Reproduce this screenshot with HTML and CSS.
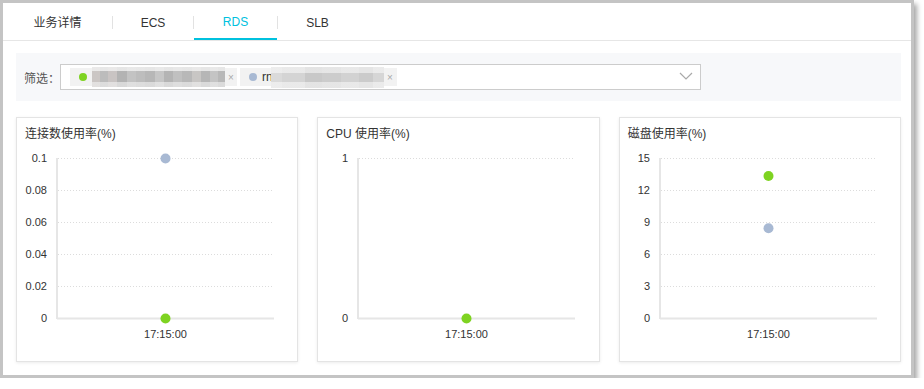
FILE: index.html
```html
<!DOCTYPE html>
<html lang="zh-CN">
<head>
  <meta charset="UTF-8" />
  <title>RDS 监控</title>
  <link rel="stylesheet" href="styles.css">
</head>
<body>
  <div class="window">
    <!-- Tabs -->
    <div class="tabs">
      <div class="tab tab-biz">业务详情</div>
      <span class="tab-sep"></span>
      <div class="tab tab-ecs">ECS</div>
      <span class="tab-sep"></span>
      <div class="tab tab-rds active">RDS</div>
      <span class="tab-sep"></span>
      <div class="tab tab-slb">SLB</div>
    </div>

    <div class="content">
      <!-- Filter -->
      <div class="filter">
        <span class="filter-label">筛选：</span>
        <div class="select">
          <div class="tag">
            <span class="dot green"></span>
            <span class="blur blur-a"></span>
            <span class="tag-close">×</span>
          </div>
          <div class="tag tag-b">
            <span class="dot blue"></span>
            <span class="tag-text">rn</span>
            <span class="blur blur-b"></span>
            <span class="tag-close">×</span>
          </div>
          <svg class="chevron" width="14" height="8" viewBox="0 0 14 8">
            <path d="M1 1 L7 7 L13 1" fill="none" stroke="#a9a9a9" stroke-width="1.2"/>
          </svg>
        </div>
      </div>

      <!-- Charts -->
      <div class="cards">
        <div class="card">
          <div class="card-title">连接数使用率(%)</div>
          <svg class="chart" width="280" height="210" viewBox="0 0 280 210">
            <g class="grid">
              <line x1="41" y1="16.5" x2="257" y2="16.5"/>
              <line x1="41" y1="48.5" x2="257" y2="48.5"/>
              <line x1="41" y1="80.5" x2="257" y2="80.5"/>
              <line x1="41" y1="112.5" x2="257" y2="112.5"/>
              <line x1="41" y1="144.5" x2="257" y2="144.5"/>
            </g>
            <g class="axis">
              <line x1="40" y1="16" x2="40" y2="177"/>
              <line x1="40" y1="176.5" x2="257" y2="176.5"/>
            </g>
            <g class="ylabels">
              <text x="30" y="20">0.1</text>
              <text x="30" y="52">0.08</text>
              <text x="30" y="84">0.06</text>
              <text x="30" y="116">0.04</text>
              <text x="30" y="148">0.02</text>
              <text x="30" y="180">0</text>
            </g>
            <text class="xlabel" x="148.5" y="196">17:15:00</text>
            <circle cx="148.5" cy="16.5" r="5" fill="#a8b9d3"/>
            <circle cx="148.5" cy="176.5" r="5" fill="#7ed321"/>
          </svg>
        </div>

        <div class="card">
          <div class="card-title">CPU 使用率(%)</div>
          <svg class="chart" width="280" height="210" viewBox="0 0 280 210">
            <g class="grid">
              <line x1="41" y1="16.5" x2="257" y2="16.5"/>
            </g>
            <g class="axis">
              <line x1="40" y1="16" x2="40" y2="177"/>
              <line x1="40" y1="176.5" x2="257" y2="176.5"/>
            </g>
            <g class="ylabels">
              <text x="30" y="20">1</text>
              <text x="30" y="180">0</text>
            </g>
            <text class="xlabel" x="148.5" y="196">17:15:00</text>
            <circle cx="148.5" cy="176.5" r="5" fill="#7ed321"/>
          </svg>
        </div>

        <div class="card">
          <div class="card-title">磁盘使用率(%)</div>
          <svg class="chart" width="280" height="210" viewBox="0 0 280 210">
            <g class="grid">
              <line x1="41" y1="16.5" x2="257" y2="16.5"/>
              <line x1="41" y1="48.5" x2="257" y2="48.5"/>
              <line x1="41" y1="80.5" x2="257" y2="80.5"/>
              <line x1="41" y1="112.5" x2="257" y2="112.5"/>
              <line x1="41" y1="144.5" x2="257" y2="144.5"/>
            </g>
            <g class="axis">
              <line x1="40" y1="16" x2="40" y2="177"/>
              <line x1="40" y1="176.5" x2="257" y2="176.5"/>
            </g>
            <g class="ylabels">
              <text x="30" y="20">15</text>
              <text x="30" y="52">12</text>
              <text x="30" y="84">9</text>
              <text x="30" y="116">6</text>
              <text x="30" y="148">3</text>
              <text x="30" y="180">0</text>
            </g>
            <text class="xlabel" x="148.5" y="196">17:15:00</text>
            <circle cx="148.5" cy="34" r="5" fill="#7ed321"/>
            <circle cx="148.5" cy="86.3" r="5" fill="#a8b9d3"/>
          </svg>
        </div>
      </div>
    </div>
  </div>
</body>
</html>
```

FILE: styles.css
```css
body {
  margin: 0;
  background-color: #ffffff;
  font-family: "Liberation Sans", "Noto Sans CJK SC", sans-serif;
  color: #333;
}

.window {
  width: 908px;
  height: 372px;
  border: 3px solid #c4c4c4;
  background-color: #fff;
  box-shadow: 3px 4px 5px rgba(0, 0, 0, 0.35);
}

/* Tabs */
.tabs {
  display: flex;
  align-items: center;
  height: 37px;
  border-bottom: 1px solid #e6e6e6;
}

.tab {
  height: 37px;
  line-height: 40px;
  box-sizing: border-box;
  text-align: center;
  font-size: 12px;
  color: #333;
}

.tab-biz { width: 109px; }
.tab-ecs { width: 80px; }
.tab-rds { width: 83px; }
.tab-slb { width: 79px; }

.tab.active {
  color: #00c1de;
  border-bottom: 2px solid #00c1de;
  line-height: 38px;
}

.tab-sep {
  width: 1px;
  height: 13px;
  background-color: #e2e2e2;
  margin-top: 2px;
}

.content {
  padding: 12px 10px 0 13px;
}

/* Filter */
.filter {
  display: flex;
  align-items: center;
  height: 48px;
  background-color: #f7f8fa;
  padding-left: 8px;
}

.filter-label {
  font-size: 12px;
  color: #555;
  width: 36px;
}

.select {
  display: flex;
  align-items: center;
  gap: 3px;
  width: 630px;
  height: 24px;
  border: 1px solid #cccccc;
  background-color: #fff;
  padding-left: 9px;
}

.tag {
  display: flex;
  align-items: center;
  width: 167px;
  height: 18px;
  background-color: #f2f2f2;
  box-sizing: border-box;
  padding-left: 9px;
}

.tag-b {
  width: 157px;
}

.dot {
  width: 8px;
  height: 8px;
  border-radius: 50%;
  margin-right: 5px;
  flex-shrink: 0;
}

.dot.green { background-color: #7ed321; }
.dot.blue { background-color: #a8b9d3; }

.tag-text {
  font-size: 12px;
  color: #333;
  width: 9px;
}

.blur {
  height: 20px;
  flex-shrink: 0;
}

.blur-a {
  width: 133px;
  background:
    linear-gradient(180deg, rgba(242,242,242,0.8) 0 20%, rgba(242,242,242,0) 20% 75%, rgba(242,242,242,0.6) 75%),
    linear-gradient(90deg, #cbc6c4 0 6%, #bcbcbc 6% 12%, #c9c4c3 12% 19%, #b3b3b3 19% 26%, #c3c3c3 26% 33%,
      #bdbdbd 33% 40%, #b7b7b7 40% 47%, #c6c6c6 47% 54%, #b4b4b4 54% 61%, #c0c0c0 61% 68%,
      #b8b8b8 68% 75%, #c8c6c4 75% 82%, #b6b6b6 82% 89%, #c4c4c4 89% 95%, #b8b8b8 95%);
}

.blur-b {
  width: 113px;
  height: 21px;
  background:
    linear-gradient(180deg, rgba(255,255,255,0.5) 0 30%, rgba(255,255,255,0) 30% 70%, rgba(255,255,255,0.5) 70%),
    linear-gradient(90deg, #dadada 0 10%, #d4d4d4 10% 30%, #c8c8c8 30% 45%, #cccccc 45% 62%,
      #d2d2d2 62% 78%, #cbcbcb 78% 90%, #d6d6d6 90%);
}

.tag-close {
  font-size: 10px;
  color: #aaa;
  margin-left: 3px;
}

.chevron {
  margin-left: auto;
  margin-right: 7px;
  margin-bottom: 3px;
}

/* Cards */
.cards {
  display: grid;
  grid-template-columns: repeat(3, 1fr);
  gap: 19px;
  margin-top: 16px;
}

.card {
  height: 245px;
  box-sizing: border-box;
  border: 1px solid #e4e4e4;
  box-shadow: 0 1px 3px rgba(0, 0, 0, 0.08);
  background-color: #fff;
  padding-top: 8px;
}

.card-title {
  font-size: 12px;
  line-height: 16px;
  color: #333;
  padding-left: 8px;
}

.chart {
  display: block;
}

.chart .grid line {
  stroke: #dcdcdc;
  stroke-width: 1;
  stroke-dasharray: 1 2;
}

.chart .axis line {
  stroke: #e6e6e6;
  stroke-width: 2;
}

.chart text {
  font-family: "Liberation Sans", sans-serif;
  font-size: 11px;
  fill: #333;
}

.chart .ylabels text {
  text-anchor: end;
}

.chart .xlabel {
  text-anchor: middle;
}
```
